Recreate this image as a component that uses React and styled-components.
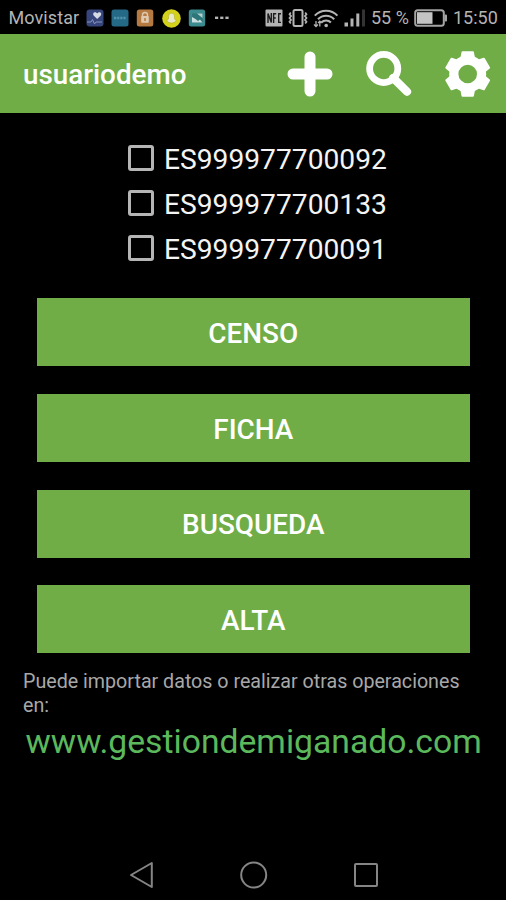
import React from "react"
import styled, { createGlobalStyle } from "styled-components"

const Green = "#70ad47"
const LinkGreen = "#5cb85c"
const White = "#fff"
const StatusGrey = "#b4b4b4"

const GlobalStyle = createGlobalStyle`
  body {
    margin: 0;
    background-color: #000;
    font-family: Roboto, "Liberation Sans", sans-serif;
  }
`

const Screen = styled.div`
  display: flex;
  flex-direction: column;
  width: 506px;
  height: 900px;
  overflow: hidden;
  background-color: #000;
`

const StatusBar = styled.div`
  display: flex;
  align-items: center;
  flex: none;
  box-sizing: border-box;
  height: 34px;
  padding: 2px 8px 0 8.500px;
  color: ${StatusGrey};

  svg {
    display: block;
    flex: none;
  }
`

const StatusText = styled.span`
  width: ${(props) => props.$width}px;
  font-size: 18px;
  line-height: 22px;
  letter-spacing: ${(props) => props.$spacing || 0}px;
  white-space: nowrap;
`

const Notifications = styled.div`
  display: flex;
  align-items: center;
  gap: 7.2px;
  margin-left: 5.5px;
`

const SystemIcons = styled.div`
  display: flex;
  align-items: center;
  gap: 5px;
  margin-left: auto;
`

const Header = styled.header`
  display: flex;
  align-items: center;
  flex: none;
  box-sizing: border-box;
  height: 79px;
  padding: 0 15.5px 0 23px;
  background-color: ${Green};
`

const UserName = styled.h1`
  flex: 1;
  margin: 0;
  padding-top: 2px;
  font-weight: 500;
  font-size: 27.8px;
  line-height: 32px;
  color: ${White};
`

const Actions = styled.div`
  display: flex;
  gap: 33px;
`

const IconButton = styled.button`
  display: block;
  padding: 0;
  border: 0;
  background: none;
  color: ${White};

  svg {
    display: block;
  }
`

const AnimalList = styled.ul`
  display: flex;
  flex-direction: column;
  flex: none;
  margin: 22px 0 0 128px;
  padding: 0;
  list-style: none;
`

const AnimalRow = styled.li`
  display: flex;
  align-items: center;
  gap: 10px;
  height: 45px;
  font-size: 28.2px;
  line-height: 33px;
  color: #f4f4f4;
`

const AnimalCode = styled.span`
  padding-top: 3px;
`

const Checkbox = styled.input`
  appearance: none;
  box-sizing: border-box;
  width: 26px;
  height: 26px;
  margin: 0;
  border: 3px solid #b5b5b5;
  border-radius: 3px;
`

const Menu = styled.nav`
  display: flex;
  flex-direction: column;
  flex: none;
  gap: 27.7px;
  margin: 28.4px 36px 0 36.6px;
`

const MenuButton = styled.button`
  height: 68px;
  padding: 2px 0 0;
  border: 0;
  background-color: ${Green};
  font-family: inherit;
  font-weight: 500;
  font-size: 27.9px;
  line-height: 33px;
  color: ${White};
`

const Hint = styled.p`
  margin: 17px 23px 0;
  font-size: 19.67px;
  line-height: 24px;
  color: #a8a8a8;
`

const SiteLink = styled.a`
  margin: 5px 0 0 25.5px;
  font-size: 33.7px;
  line-height: 38px;
  white-space: nowrap;
  color: ${LinkGreen};
`

const NavBar = styled.div`
  display: flex;
  justify-content: space-between;
  flex: none;
  margin-top: auto;
  padding: 0 127px 11px 128.5px;
`

const animals = ["ES999977700092", "ES999977700133", "ES999977700091"]
const sections = ["CENSO", "FICHA", "BUSQUEDA", "ALTA"]

const HealthIcon = () => (
  <svg width="18" height="18" viewBox="0 0 18 18">
    <rect x="0.5" y="0.5" width="17" height="17" rx="3" fill="#36467c" />
    <path d="M11.200 10L7.600 6.400C6.600 5 7.400 3.200 9 3.200c1.100 0 1.800.6 2.200 1.400.4-.8 1.100-1.400 2.200-1.400 1.600 0 2.400 1.800 1.400 3.200z" fill="#d5d9e6" />
    <path d="M1 13h4l1.500-2.500 2 4.500 1.500-2h6" fill="none" stroke="#8893bb" strokeWidth="1" />
  </svg>
)

const BankIcon = () => (
  <svg width="18" height="18" viewBox="0 0 18 18">
    <rect x="0.5" y="0.5" width="17" height="17" rx="2.5" fill="#246985" />
    <path d="M3 9h12" stroke="#4f92ac" strokeWidth="2.6" strokeDasharray="2.3 0.8" />
  </svg>
)

const LockIcon = () => (
  <svg width="18" height="18" viewBox="0 0 18 18">
    <rect x="0.8" y="0.5" width="16.5" height="17" rx="2.5" fill="#b57a42" />
    <path d="M6.500 8V6a2.500 2.500 0 0 1 5 0v2" fill="none" stroke="#dfc9b1" strokeWidth="1.4" />
    <rect x="5.2" y="7" width="7.6" height="6.8" rx="0.8" fill="#dfc9b1" />
    <rect x="8.2" y="9" width="1.6" height="3" fill="#b57a42" />
  </svg>
)

const GhostIcon = () => (
  <svg width="19" height="19" viewBox="0 0 19 19">
    <circle cx="9.5" cy="9.5" r="9.3" fill="#d3d119" />
    <path
      d="M9.500 4.200c-2 0-3 1.400-3 3v2c0 1.300-1 2-2 2.400.5.900 1.600.9 2 1.600 1 .1 1.800.9 3 .9s2-.8 3-.9c.4-.7 1.500-.7 2-1.600-1-.4-2-1.100-2-2.400v-2c0-1.600-1-3-3-3z"
      fill="#e9e9c9"
      stroke="#a8a51b"
      strokeWidth="0.5"
    />
  </svg>
)

const PictureIcon = () => (
  <svg width="18" height="18" viewBox="0 0 18 18">
    <rect x="0.8" y="0.5" width="16.4" height="17" rx="2.5" fill="#3c8b8e" />
    <rect x="4" y="4.5" width="10.5" height="9" fill="#2e7579" />
    <path d="M4 13.500V8l3.500 2 2.500 2 2-1.500 2.500 3z" fill="#c9dede" />
    <path d="M9 4.500h5.500V9L12 7z" fill="#b4d0d1" />
  </svg>
)

const MoreIcon = () => (
  <svg width="18" height="18" viewBox="0 0 18 18" fill="currentColor">
    <rect x="2" y="7.6" width="3.2" height="2.4" />
    <rect x="7.2" y="7.6" width="3.2" height="2.4" />
    <rect x="12.4" y="7.6" width="3.2" height="2.4" />
  </svg>
)

const NfcIcon = () => (
  <svg width="18" height="18" viewBox="0 0 18 18">
    <rect x="0.5" y="0.5" width="17" height="17" rx="1" fill="#b4b4b4" />
    <path d="M3 14V4.500l3.300 9V4M8.600 14V4.700h2.600M8.600 9h2.200M16 4.800h-2.300v8.600H16" fill="none" stroke="#1c1c1c" strokeWidth="1.4" />
  </svg>
)

const VibrateIcon = () => (
  <svg width="20" height="18" viewBox="0 0 20 18" fill="none" stroke="#b4b4b4">
    <rect x="5.5" y="1" width="9" height="16" rx="1.5" strokeWidth="2" />
    <path
      d="M2.800 3.500l-1.300 1.700 1.600 1.900-1.600 1.900 1.600 1.900-1.600 1.900 1.300 1.700M17.200 3.500l1.300 1.700-1.600 1.900 1.600 1.900-1.600 1.900 1.600 1.900-1.300 1.700"
      strokeWidth="1.7"
    />
  </svg>
)

const WifiIcon = () => (
  <svg width="26" height="19" viewBox="0 0 26 19" fill="none" stroke="#b4b4b4" strokeWidth="2.1">
    <path d="M1.800 6.600a15.500 15.500 0 0 1 22.600 0M5 10.200a11.200 11.200 0 0 1 16.200 0M8.300 13.500a6.800 6.800 0 0 1 9.600 0" />
    <circle cx="13.2" cy="16.5" r="1.8" fill="#b4b4b4" stroke="none" />
    <path d="M3 12v5.500M1 15.500l2 2 2-2M6.800 17.500V12M5 14l1.800-1.800L8.600 14" strokeWidth="1.3" />
  </svg>
)

const SignalIcon = () => (
  <svg width="22" height="18" viewBox="0 0 22 18" fill="#b4b4b4">
    <rect x="0.5" y="13.5" width="3.5" height="4" />
    <rect x="6.5" y="9.5" width="3" height="8" />
    <rect x="12.3" y="4.5" width="3" height="13" />
    <rect x="18" y="0.5" width="3" height="17" fill="#333" />
  </svg>
)

const BatteryIcon = () => (
  <svg width="34" height="18" viewBox="0 0 34 18">
    <rect x="1.2" y="1.2" width="28.6" height="15.6" rx="2.5" fill="none" stroke="#a4a4a4" strokeWidth="2" />
    <rect x="3" y="3.2" width="15.5" height="11.6" fill="#c4c4c4" />
    <rect x="30.5" y="5.5" width="2.5" height="7" rx="1" fill="#a4a4a4" />
  </svg>
)

const PlusIcon = () => (
  <svg width="46" height="46" viewBox="0 0 46 46" fill="none" stroke="currentColor" strokeWidth="11" strokeLinecap="round">
    <path d="M23 6v34M6 23h34" />
  </svg>
)

const SearchIcon = () => (
  <svg width="46" height="46" viewBox="0 0 46 46" fill="none" stroke="currentColor" strokeLinecap="round">
    <circle cx="17.7" cy="17.5" r="14.1" strokeWidth="6.8" />
    <path d="M27.200 27L41 40.700" strokeWidth="8.2" />
  </svg>
)

const GearIcon = () => (
  <svg width="46" height="46" viewBox="0 0 46 46">
    <circle cx="22.7" cy="23" r="13.9" fill="none" stroke="currentColor" strokeWidth="9.2" />
    {[0, 60, 120, 180, 240, 300].map((angle) => (
      <path
        key={angle}
        d="M17.500 1.300h10.400l1.300 7h-13z"
        transform={`rotate(${angle} 22.7 23)`}
        fill="currentColor"
        stroke="currentColor"
        strokeWidth="2"
        strokeLinejoin="round"
      />
    ))}
  </svg>
)

const BackIcon = () => (
  <svg width="26" height="28" viewBox="0 0 26 28" fill="none" stroke="#858585" strokeWidth="2" strokeLinejoin="round">
    <path d="M22.800 2v24L2 14z" />
  </svg>
)

const HomeIcon = () => (
  <svg width="28" height="28" viewBox="0 0 28 28" fill="none" stroke="#858585" strokeWidth="2">
    <circle cx="13.7" cy="14" r="12.5" />
  </svg>
)

const RecentIcon = () => (
  <svg width="26" height="28" viewBox="0 0 26 28" fill="none" stroke="#858585" strokeWidth="2">
    <rect x="2" y="3" width="22" height="22" rx="1" />
  </svg>
)

const App = () => (
  <Screen>
    <GlobalStyle />
    <StatusBar>
      <StatusText $width={72} $spacing={0.1}>
        Movistar
      </StatusText>
      <Notifications>
        <HealthIcon />
        <BankIcon />
        <LockIcon />
        <GhostIcon />
        <PictureIcon />
        <MoreIcon />
      </Notifications>
      <SystemIcons>
        <NfcIcon />
        <VibrateIcon />
        <WifiIcon />
        <SignalIcon />
        <StatusText $width={38}>55 %</StatusText>
        <BatteryIcon />
        <StatusText $width={45}>15:50</StatusText>
      </SystemIcons>
    </StatusBar>
    <Header>
      <UserName>usuariodemo</UserName>
      <Actions>
        <IconButton aria-label="Añadir">
          <PlusIcon />
        </IconButton>
        <IconButton aria-label="Buscar">
          <SearchIcon />
        </IconButton>
        <IconButton aria-label="Ajustes">
          <GearIcon />
        </IconButton>
      </Actions>
    </Header>
    <AnimalList>
      {animals.map((code) => (
        <AnimalRow key={code}>
          <Checkbox type="checkbox" aria-label={code} />
          <AnimalCode>{code}</AnimalCode>
        </AnimalRow>
      ))}
    </AnimalList>
    <Menu>
      {sections.map((label) => (
        <MenuButton key={label}>{label}</MenuButton>
      ))}
    </Menu>
    <Hint>Puede importar datos o realizar otras operaciones en:</Hint>
    <SiteLink>www.gestiondemiganado.com</SiteLink>
    <NavBar>
      <BackIcon />
      <HomeIcon />
      <RecentIcon />
    </NavBar>
  </Screen>
)

export default App
